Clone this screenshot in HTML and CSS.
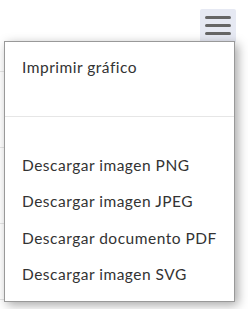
FILE: index.html
```html
<!DOCTYPE html>
<html lang="es">
<head>
<meta charset="utf-8">
<link rel="stylesheet" href="styles.css">
</head>
<body>
<div class="chart">
  <div class="toolbar">
    <button class="context-btn" aria-label="Menú del gráfico">
      <svg width="26" height="20" viewBox="0 0 26 20">
        <path d="M1.5 1.5H24.5M1.5 9.5H24.5M1.5 17.5H24.5" stroke="#666" stroke-width="3" stroke-linecap="round" fill="none"/>
      </svg>
    </button>
  </div>
  <ul class="menu">
    <li class="item">Imprimir gráfico</li>
    <li class="sep"></li>
    <li class="item gap">Descargar imagen PNG</li>
    <li class="item">Descargar imagen JPEG</li>
    <li class="item">Descargar documento PDF</li>
    <li class="item">Descargar imagen SVG</li>
  </ul>
</div>
</body>
</html>
```
FILE: styles.css
```css
html, body {
  margin: 0;
  padding: 0;
  background: #fff;
}
.chart {
  position: relative;
  width: 248px;
  height: 309px;
  overflow: hidden;
  background:
    linear-gradient(#e6e6e6, #e6e6e6) 0 71px / 10px 1px no-repeat,
    linear-gradient(#e6e6e6, #e6e6e6) 0 147px / 10px 1px no-repeat,
    linear-gradient(#e6e6e6, #e6e6e6) 0 223px / 10px 1px no-repeat,
    linear-gradient(#e6e6e6, #e6e6e6) 0 299px / 10px 1px no-repeat,
    #fff;
}
.toolbar {
  display: flex;
  justify-content: flex-end;
  padding: 9px 12px 0 0;
}
.context-btn {
  width: 36px;
  height: 34px;
  border: 0;
  border-radius: 2px;
  background: #e6e9f3;
  padding: 7px 0 0 0;
  margin: 0;
  display: flex;
  justify-content: center;
  align-items: flex-start;
}
.context-btn svg {
  display: block;
}
.menu {
  position: absolute;
  left: 4px;
  top: 41px;
  width: 229px;
  height: 259px;
  margin: 0;
  padding: 0;
  list-style: none;
  background: #fff;
  border: 1px solid #999;
  box-shadow: 3px 3px 10px rgba(0, 0, 0, 0.35);
  font-family: Lato, "Liberation Sans", sans-serif;
  font-size: 15.5px;
  letter-spacing: 0.5px;
  color: #333;
}
.item {
  padding: 0 0 0 17px;
  height: 36.6px;
  line-height: 36.6px;
}
.menu .item:first-child {
  margin-top: 7px;
}
.sep {
  height: 1px;
  background: #e6e6e6;
  margin-top: 30px;
}
.gap {
  margin-top: 30px;
}
```
